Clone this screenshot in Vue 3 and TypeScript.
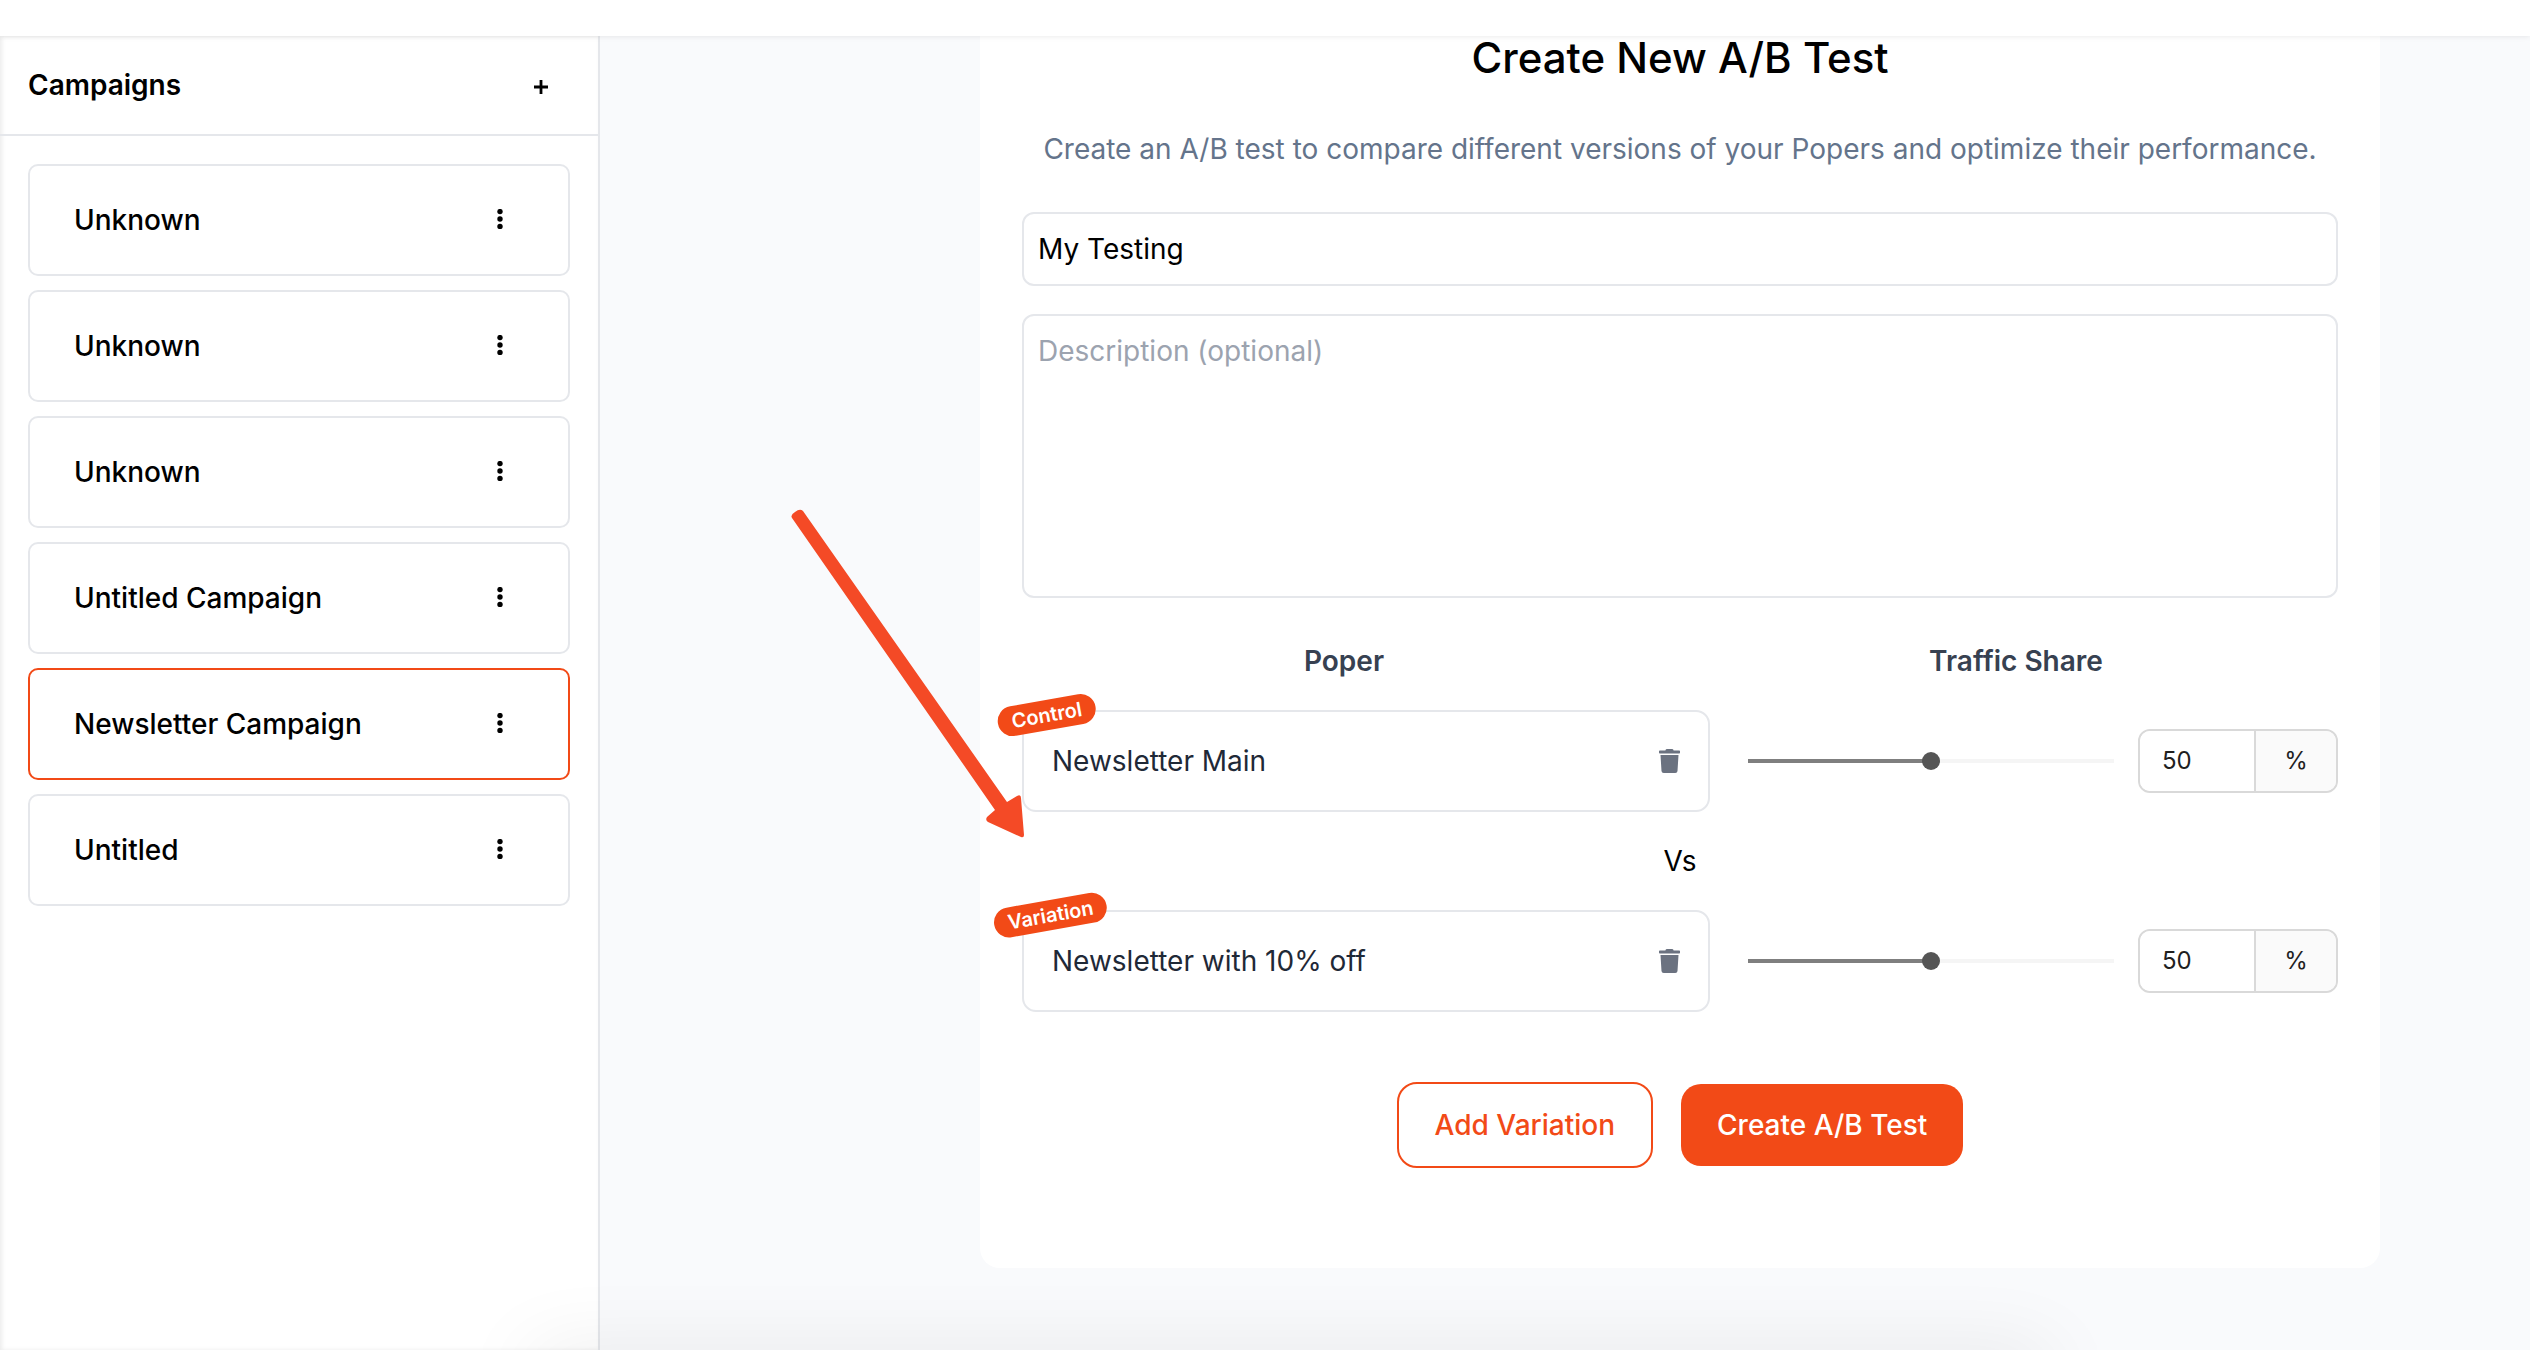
<script setup lang="ts">
import { ref } from 'vue'

interface Campaign {
  id: number
  name: string
}

interface Variant {
  id: string
  label: string
  name: string
  share: number
}

const campaigns: Campaign[] = [
  { id: 1, name: 'Unknown' },
  { id: 2, name: 'Unknown' },
  { id: 3, name: 'Unknown' },
  { id: 4, name: 'Untitled Campaign' },
  { id: 5, name: 'Newsletter Campaign' },
  { id: 6, name: 'Untitled' },
]
const selectedId = ref(5)

const testName = ref('My Testing')
const description = ref('')
const variants = ref<Variant[]>([
  { id: 'control', label: 'Control', name: 'Newsletter Main', share: 50 },
  { id: 'variation', label: 'Variation', name: 'Newsletter with 10% off', share: 50 },
])
</script>

<template>
  <div class="page">
    <header class="topbar"></header>

    <div class="body">
      <aside class="sidebar">
        <div class="sidebar-head">
          <h2>Campaigns</h2>
          <button type="button" class="icon-btn" aria-label="Add campaign">
            <svg width="14" height="18" viewBox="0 0 14 18"><path d="M7 4v14M0 11h14" stroke="#000" stroke-width="2.8" /></svg>
          </button>
        </div>
        <ul class="campaigns">
          <li v-for="c in campaigns" :key="c.id" class="campaign" :class="{ active: c.id === selectedId }">
            <button type="button" class="campaign-name" @click="selectedId = c.id">{{ c.name }}</button>
            <button type="button" class="icon-btn" aria-label="Campaign options">
              <svg width="6" height="22" viewBox="0 0 6 22">
                <circle cx="3" cy="2.6" r="2.7" /><circle cx="3" cy="10" r="2.7" /><circle cx="3" cy="17.4" r="2.7" />
              </svg>
            </button>
          </li>
        </ul>
      </aside>

      <main class="main">
        <form class="panel" @submit.prevent>
          <h1>Create New A/B Test</h1>
          <p class="lead">Create an A/B test to compare different versions of your Popers and optimize their performance.</p>

          <input v-model="testName" class="field" type="text" aria-label="Test name" />
          <textarea v-model="description" class="field area" placeholder="Description (optional)" aria-label="Description"></textarea>

          <div class="heads">
            <span>Poper</span>
            <span>Traffic Share</span>
          </div>

          <template v-for="(v, i) in variants" :key="v.id">
            <div v-if="i > 0" class="vs">Vs</div>
            <div class="variant">
              <div class="poper">
                <span>{{ v.name }}</span>
                <button type="button" class="icon-btn" aria-label="Remove">
                  <svg width="21" height="24" viewBox="0 0 448 512" fill="#6b7280">
                    <path d="M432 32H312l-9.4-18.7A24 24 0 0 0 281.1 0H166.8a23.72 23.72 0 0 0-21.4 13.3L136 32H16A16 16 0 0 0 0 48v32a16 16 0 0 0 16 16h416a16 16 0 0 0 16-16V48a16 16 0 0 0-16-16zM53.2 467a48 48 0 0 0 47.9 45h245.8a48 48 0 0 0 47.9-45L416 128H32z" />
                  </svg>
                </button>
                <span class="badge">{{ v.label }}</span>
              </div>
              <div class="share">
                <input
                  v-model.number="v.share"
                  class="slider"
                  type="range"
                  min="0"
                  max="100"
                  :aria-label="`${v.label} traffic share`"
                  :style="{ '--fill': v.share + '%' }"
                />
                <label class="percent">
                  <input v-model="v.share" type="text" :aria-label="`${v.label} percent`" />
                  <span>%</span>
                </label>
              </div>
            </div>
          </template>

          <div class="actions">
            <button type="button" class="btn outline">Add Variation</button>
            <button type="submit" class="btn solid">Create A/B Test</button>
          </div>

          <svg class="arrow" width="240" height="334" viewBox="0 0 240 334" aria-hidden="true">
            <path
              d="M8 14Q6 11 11 8Q16 4 19 7L223 298L233 292Q237 290 237 294L240 331Q240 334 237 333L204 318Q201 316 203 313L211 306Z"
              fill="#f44a26"
            />
          </svg>
        </form>
      </main>
    </div>
    <div class="bottom-glow"></div>
  </div>
</template>

<style>
body {
  margin: 0;
}
</style>

<style scoped>
* {
  box-sizing: border-box;
}
.page {
  position: relative;
  display: flex;
  flex-direction: column;
  height: 100vh;
  overflow: hidden;
  font: 400 28px/42px Inter, sans-serif;
  color: #000;
  background: #f9fafc;
}
button,
input,
textarea {
  font: inherit;
  color: inherit;
  margin: 0;
}
.topbar {
  position: relative;
  z-index: 2;
  flex: none;
  height: 36px;
  background: #fff;
  box-shadow: 0 0 6px rgba(0, 0, 0, 0.1);
}
.body {
  flex: 1;
  display: flex;
  min-height: 0;
}
.sidebar {
  flex: none;
  width: 600px;
  background: #fff;
  border-right: 2px solid #e5e7eb;
  box-shadow: inset 2px 0 4px rgba(0, 0, 0, 0.08);
}
.sidebar-head {
  display: flex;
  align-items: center;
  justify-content: space-between;
  height: 100px;
  padding: 0 50px 0 28px;
  border-bottom: 2px solid #e5e7eb;
}
h2 {
  margin: 0;
  font-size: 28px;
  font-weight: 600;
}
.icon-btn {
  display: flex;
  padding: 0;
  border: 0;
  background: none;
  cursor: pointer;
}
.campaigns {
  display: flex;
  flex-direction: column;
  gap: 14px;
  margin: 0;
  padding: 28px;
  list-style: none;
}
.campaign {
  display: flex;
  align-items: center;
  justify-content: space-between;
  height: 112px;
  padding: 0 65px 0 44px;
  border: 2px solid #e5e7eb;
  border-radius: 10px;
}
.campaign.active {
  border-color: #f24a17;
}
.campaign-name {
  padding: 0;
  border: 0;
  background: none;
  font-weight: 500;
  cursor: pointer;
}
.main {
  flex: 1;
  min-width: 0;
  padding-left: 230px;
}
.panel {
  position: relative;
  max-width: 1400px;
  margin: 0 auto;
  padding: 0 42px 100px;
  background: #fff;
  border-radius: 0 0 20px 20px;
}
h1 {
  margin: 0 0 48px;
  font-size: 42px;
  line-height: 44px;
  font-weight: 500;
  text-align: center;
}
.lead {
  margin: 0 0 42px;
  color: #64748b;
  text-align: center;
}
.field {
  display: block;
  width: 100%;
  height: 74px;
  padding: 14px;
  border: 2px solid #e5e7eb;
  border-radius: 12px;
  background: #fff;
  outline: none;
}
.area {
  height: 284px;
  margin-top: 28px;
  resize: none;
}
.area::placeholder {
  color: #9ca3af;
}
.heads {
  display: grid;
  grid-template-columns: 1fr 1fr;
  gap: 28px;
  margin: 42px 0 28px;
  color: #374151;
  font-weight: 600;
  text-align: center;
}
.variant {
  display: grid;
  grid-template-columns: 688fr 600fr;
  gap: 28px;
  align-items: center;
}
.poper {
  position: relative;
  display: flex;
  align-items: center;
  justify-content: space-between;
  height: 102px;
  padding: 0 28px;
  border: 2px solid #e5e7eb;
  border-radius: 14px;
  color: #1f2937;
}
.badge {
  position: absolute;
  top: -2px;
  left: -2px;
  padding: 0 14px;
  border-radius: 15px;
  background: #f24a17;
  color: #fff;
  font-size: 20px;
  line-height: 30px;
  font-weight: 600;
  transform: translate(-25%, -33%) rotate(-10deg);
}
.share {
  display: flex;
  align-items: center;
  gap: 24px;
  padding-left: 10px;
}
.slider {
  flex: 1;
  min-width: 0;
  height: 18px;
  appearance: none;
  background: linear-gradient(#7f7f7f, #7f7f7f) 0 50% / var(--fill) 4px no-repeat,
    linear-gradient(#f5f5f5, #f5f5f5) 0 50% / 100% 4px no-repeat;
}
.slider::-webkit-slider-thumb {
  appearance: none;
  width: 18px;
  height: 18px;
  border-radius: 50%;
  background: #555;
}
.percent {
  display: flex;
  width: 200px;
  height: 64px;
  border: 2px solid #d9d9d9;
  border-radius: 12px;
  overflow: hidden;
  color: #1f1f1f;
  font-size: 24px;
}
.percent input {
  flex: 1;
  min-width: 0;
  padding: 0 22px;
  border: 0;
  background: #fff;
  outline: none;
}
.percent span {
  display: flex;
  align-items: center;
  justify-content: center;
  width: 82px;
  border-left: 2px solid #d9d9d9;
  background: #fafafa;
}
.vs {
  padding: 28px 0;
  text-align: center;
}
.actions {
  display: flex;
  align-items: center;
  justify-content: center;
  gap: 28px;
  margin-top: 70px;
}
.btn {
  height: 82px;
  padding: 0 36px;
  border: 0;
  border-radius: 20px;
  font-weight: 500;
  cursor: pointer;
}
.solid {
  background: #f24a17;
  color: #fff;
}
.outline {
  height: 86px;
  border: 2px solid #f24a17;
  background: #fff;
  color: #f24a17;
}
.arrow {
  position: absolute;
  top: 468px;
  left: -196px;
  overflow: visible;
  pointer-events: none;
}
.bottom-glow {
  position: absolute;
  top: 100%;
  left: 21%;
  right: 19%;
  height: 60px;
  box-shadow: 0 0 80px rgba(0, 0, 0, 0.08);
  pointer-events: none;
}
</style>
